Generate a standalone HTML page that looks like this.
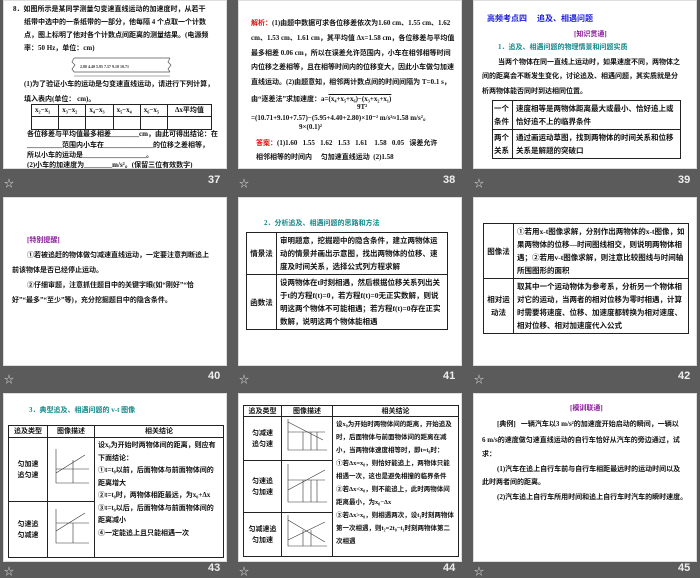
<!DOCTYPE html>
<html><head><meta charset="utf-8"><style>
*{margin:0;padding:0;box-sizing:border-box}
body{width:700px;height:578px;background:#5b5b5b;position:relative;overflow:hidden;font-family:"Liberation Serif","Noto Sans CJK SC",serif;font-weight:bold;color:#111}
.s{position:absolute;background:#fff;width:224px;height:169px;overflow:hidden;border:1px solid #ddd}
.l{position:absolute;font-size:7px;white-space:nowrap;line-height:10px}
.f{position:absolute;color:#eee;font-family:"Liberation Sans",sans-serif;font-size:11px;font-weight:bold}
.st{position:absolute;color:#ccc;font-size:10px}
table{position:absolute;border-collapse:collapse;font-size:7.5px}
td{border:1px solid #222;padding:1px 3px;line-height:13px;vertical-align:middle}
.c{text-align:center}
.blue{color:#1a1adc}.pur{color:#8a1a9a}.teal{color:#138a8a}.red{color:#e01010}
</style></head><body>

<!-- slide 37 -->
<div class="s" style="left:3px;top:0">
<div class="l" style="left:9px;top:3px">8．如图所示是某同学测量匀变速直线运动的加速度时，从若干</div>
<div class="l" style="left:20px;top:16px">纸带中选中的一条纸带的一部分，他每隔 4 个点取一个计数</div>
<div class="l" style="left:20px;top:29px">点，图上标明了他对各个计数点间距离的测量结果。(电源频</div>
<div class="l" style="left:20px;top:42px">率：50 Hz，单位：cm)</div>
<svg style="position:absolute;left:66px;top:54px" width="104" height="24"><path d="M4 3H100M4 17H100M4 3l-2 4 3 3-3 4 2 3M100 3l-2 4 3 3-3 4 2 3" stroke="#555" fill="none" stroke-width=".7"/><text x="10" y="13" font-size="4" fill="#333">2.80 4.40 5.95 7.57 9.10 10.71</text><path d="M4 21H100" stroke="#555" stroke-width=".5"/></svg>
<div class="l" style="left:20px;top:78px">(1)为了验证小车的运动是匀变速直线运动，请进行下列计算，</div>
<div class="l" style="left:20px;top:93px">填入表内(单位：&nbsp;cm)。</div>
<table style="left:27px;top:103px;width:181px;font-size:7px"><tr><td style="height:12px;line-height:9px">x₂−x₁</td><td style="line-height:9px">x₃−x₂</td><td style="line-height:9px">x₄−x₃</td><td style="line-height:9px">x₅−x₄</td><td style="line-height:9px">x₆−x₅</td><td style="line-height:9px" class="c">Δx平均值</td></tr><tr><td style="height:13px"></td><td></td><td></td><td></td><td></td><td></td></tr></table>
<div class="l" style="left:23px;top:128px">各位移差与平均值最多相差________cm，由此可得出结论：在</div>
<div class="l" style="left:23px;top:139px">__________范围内小车在______________的位移之差相等，</div>
<div class="l" style="left:23px;top:149px">所以小车的运动是__________________。</div>
<div class="l" style="left:23px;top:159px">(2)小车的加速度为________m/s²。(保留三位有效数字)</div>
</div>
<div class="st" style="left:4px;top:175px">☆</div><div class="f" style="left:208px;top:174px">37</div>

<!-- slide 38 -->
<div class="s" style="left:238px;top:0">
<div class="l" style="left:12px;top:17px"><span class="red">解析：</span>(1)由题中数据可求各位移差依次为1.60 cm、1.55 cm、1.62</div>
<div class="l" style="left:12px;top:32px">cm、1.53 cm、1.61 cm，其平均值 Δx=1.58 cm，各位移差与平均值</div>
<div class="l" style="left:12px;top:47px">最多相差 0.06 cm，所以在误差允许范围内，小车在相邻相等时间</div>
<div class="l" style="left:12px;top:61px">内位移之差相等，且在相等时间内的位移变大，因此小车做匀加速</div>
<div class="l" style="left:12px;top:76px">直线运动。(2)由题意知，相邻两计数点间的时间间隔为 T=0.1 s，</div>
<div class="l" style="left:12px;top:93px">由“逐差法”求加速度：a=<span style="text-decoration:overline">(x₄+x₅+x₆)−(x₃+x₂+x₁)</span></div>
<div class="l" style="left:118px;top:101px">9T²</div>
<div class="l" style="left:12px;top:112px">=(10.71+9.10+7.57)−(5.95+4.40+2.80)×10⁻² m/s²≈1.58 m/s²。</div>
<div class="l" style="left:60px;top:121px">9×(0.1)²</div>
<div class="l" style="left:17px;top:137px"><span class="red">答案：</span>(1)1.60&nbsp;&nbsp; 1.55&nbsp;&nbsp; 1.62&nbsp;&nbsp; 1.53&nbsp;&nbsp; 1.61&nbsp;&nbsp;&nbsp; 1.58&nbsp;&nbsp; 0.05&nbsp;&nbsp; 误差允许</div>
<div class="l" style="left:17px;top:151px">相邻相等的时间内&nbsp;&nbsp;&nbsp;&nbsp; 匀加速直线运动&nbsp; (2)1.58</div>
</div>
<div class="st" style="left:239px;top:175px">☆</div><div class="f" style="left:443px;top:174px">38</div>

<!-- slide 39 -->
<div class="s" style="left:473px;top:0">
<div class="l blue" style="left:13px;top:13px;font-size:8px">高频考点四&nbsp;&nbsp;&nbsp;&nbsp; 追及、相遇问题</div>
<div class="l pur" style="left:100px;top:28px">[知识贯通]</div>
<div class="l teal" style="left:24px;top:41px">1．追及、相遇问题的物理情景和问题实质</div>
<div class="l" style="left:24px;top:56px">当两个物体在同一直线上运动时，如果速度不同，两物体之</div>
<div class="l" style="left:8px;top:70px">间的距离会不断发生变化，讨论追及、相遇问题，其实质就是分</div>
<div class="l" style="left:8px;top:85px">析两物体能否同时到达相同位置。</div>
<table style="left:18px;top:99px;width:189px"><tr><td style="width:20px;padding:1px">一个条件</td><td>速度相等是两物体距离最大或最小、恰好追上或恰好追不上的临界条件</td></tr><tr><td style="padding:1px">两个关系</td><td>通过画运动草图，找到两物体的时间关系和位移关系是解题的突破口</td></tr></table>
</div>
<div class="st" style="left:474px;top:175px">☆</div><div class="f" style="left:678px;top:174px">39</div>

<!-- slide 40 -->
<div class="s" style="left:3px;top:197px">
<div class="l pur" style="left:23px;top:37px">[特别提醒]</div>
<div class="l" style="left:23px;top:52px">①若被追赶的物体做匀减速直线运动，一定要注意判断追上</div>
<div class="l" style="left:8px;top:67px">前该物体是否已经停止运动。</div>
<div class="l" style="left:23px;top:82px">②仔细审题，注意抓住题目中的关键字眼(如“刚好”“恰</div>
<div class="l" style="left:8px;top:97px">好”“最多”“至少”等)，充分挖掘题目中的隐含条件。</div>
</div>
<div class="st" style="left:4px;top:371px">☆</div><div class="f" style="left:208px;top:370px">40</div>

<!-- slide 41 -->
<div class="s" style="left:238px;top:197px">
<div class="l teal" style="left:25px;top:20px">2．分析追及、相遇问题的思路和方法</div>
<table style="left:7px;top:34px;width:202px"><tr><td style="width:30px;padding:1px" class="c">情景法</td><td>审明题意，挖掘题中的隐含条件，建立两物体运动的情景并画出示意图，找出两物体的位移、速度及时间关系，选择公式列方程求解</td></tr><tr><td class="c" style="padding:1px">函数法</td><td>设两物体在t时刻相遇，然后根据位移关系列出关于t的方程f(t)=0，若方程f(t)=0无正实数解，则说明这两个物体不可能相遇；若方程f(t)=0存在正实数解，说明这两个物体能相遇</td></tr></table>
</div>
<div class="st" style="left:239px;top:371px">☆</div><div class="f" style="left:443px;top:370px">41</div>

<!-- slide 42 -->
<div class="s" style="left:473px;top:197px">
<table style="left:9px;top:25px;width:206px"><tr><td style="width:30px;padding:1px" class="c">图像法</td><td>①若用x-t图像求解，分别作出两物体的x-t图像，如果两物体的位移—时间图线相交，则说明两物体相遇；②若用v-t图像求解，则注意比较图线与时间轴所围图形的面积</td></tr><tr><td class="c" style="padding:1px">相对运动法</td><td>取其中一个运动物体为参考系，分析另一个物体相对它的运动，当两者的相对位移为零时相遇，计算时需要将速度、位移、加速度都转换为相对速度、相对位移、相对加速度代入公式</td></tr></table>
</div>
<div class="st" style="left:474px;top:371px">☆</div><div class="f" style="left:678px;top:370px">42</div>

<!-- slide 43 -->
<div class="s" style="left:3px;top:393px">
<div class="l teal" style="left:25px;top:11px">3．典型追及、相遇问题的 v-t 图像</div>
<table style="left:4px;top:31px;width:216px;font-size:7px"><tr><td class="c" style="width:39px;line-height:9px">追及类型</td><td class="c" style="width:47px;line-height:9px">图像描述</td><td class="c" style="line-height:9px">相关结论</td></tr>
<tr><td class="c" style="height:64px;line-height:11px">匀加速<br>追匀速</td><td><svg width="40" height="40"><path d="M5 2V36H38M5 22H38M5 26L34 8M22 13V36" stroke="#333" fill="none" stroke-width=".6"/></svg></td><td rowspan="2" style="line-height:12.5px;vertical-align:top">设x₀为开始时两物体间的距离，则应有下面结论：<br>①t=t₀以前，后面物体与前面物体间的距离增大<br>②t=t₀时，两物体相距最远，为x₀+Δx<br>③t=t₀以后，后面物体与前面物体间的距离减小<br>④一定能追上且只能相遇一次</td></tr>
<tr><td class="c" style="height:56px;line-height:11px">匀速追<br>匀减速</td><td><svg width="40" height="40"><path d="M5 2V36H38M5 16H38M5 24L34 6M22 16V36" stroke="#333" fill="none" stroke-width=".6"/></svg></td></tr></table>
</div>
<div class="st" style="left:4px;top:563px">☆</div><div class="f" style="left:208px;top:562px">43</div>

<!-- slide 44 -->
<div class="s" style="left:238px;top:393px">
<table style="left:4px;top:11px;width:216px;font-size:7px"><tr><td class="c" style="width:38px;line-height:8px">追及类型</td><td class="c" style="width:50px;line-height:8px">图像描述</td><td class="c" style="line-height:8px">相关结论</td></tr>
<tr><td class="c" style="height:42px;line-height:11px">匀减速<br>追匀速</td><td><svg width="44" height="36"><path d="M3 1V32H42M3 14H40M3 4L38 22M18 14V32M26 14V32M32 14V32" stroke="#333" fill="none" stroke-width=".6"/></svg></td><td rowspan="3" style="line-height:13px;vertical-align:top;font-size:6.5px">设x₀为开始时两物体间的距离，开始追及时，后面物体与前面物体间的距离在减小，当两物体速度相等时，即t=t₀时：<br>①若Δx=x₀，则恰好能追上，两物体只能相遇一次，这也是避免相撞的临界条件<br>②若Δx&lt;x₀，则不能追上，此时两物体间距离最小，为x₀−Δx<br>③若Δx&gt;x₀，则相遇两次，设t₁时刻两物体第一次相遇，则t₂=2t₀−t₁时刻两物体第二次相遇</td></tr>
<tr><td class="c" style="height:52px;line-height:11px">匀速追<br>匀加速</td><td><svg width="44" height="44"><path d="M3 2V40H42M3 18H40M3 28L40 8M18 18V40M26 18V40M32 18V40" stroke="#333" fill="none" stroke-width=".6"/></svg></td></tr>
<tr><td class="c" style="height:42px;line-height:11px">匀减速追<br>匀加速</td><td><svg width="44" height="36"><path d="M3 1V32H42M3 6L40 28M3 26L40 8M18 16V32M26 16V32" stroke="#333" fill="none" stroke-width=".6"/></svg></td></tr></table>
</div>
<div class="st" style="left:239px;top:563px">☆</div><div class="f" style="left:443px;top:562px">44</div>

<!-- slide 45 -->
<div class="s" style="left:473px;top:393px">
<div class="l pur" style="left:96px;top:9px">[模训联通]</div>
<div class="l" style="left:23px;top:25px">[典例]&nbsp;&nbsp; 一辆汽车以3 m/s²的加速度开始启动的瞬间，一辆以</div>
<div class="l" style="left:8px;top:41px">6 m/s的速度做匀速直线运动的自行车恰好从汽车的旁边通过，试</div>
<div class="l" style="left:8px;top:55px">求：</div>
<div class="l" style="left:23px;top:70px">(1)汽车在追上自行车前与自行车相距最远时的运动时间以及</div>
<div class="l" style="left:8px;top:83px">此时两者间的距离。</div>
<div class="l" style="left:23px;top:98px">(2)汽车追上自行车所用时间和追上自行车时汽车的瞬时速度。</div>
</div>
<div class="st" style="left:474px;top:563px">☆</div><div class="f" style="left:678px;top:562px">45</div>
</body></html>
